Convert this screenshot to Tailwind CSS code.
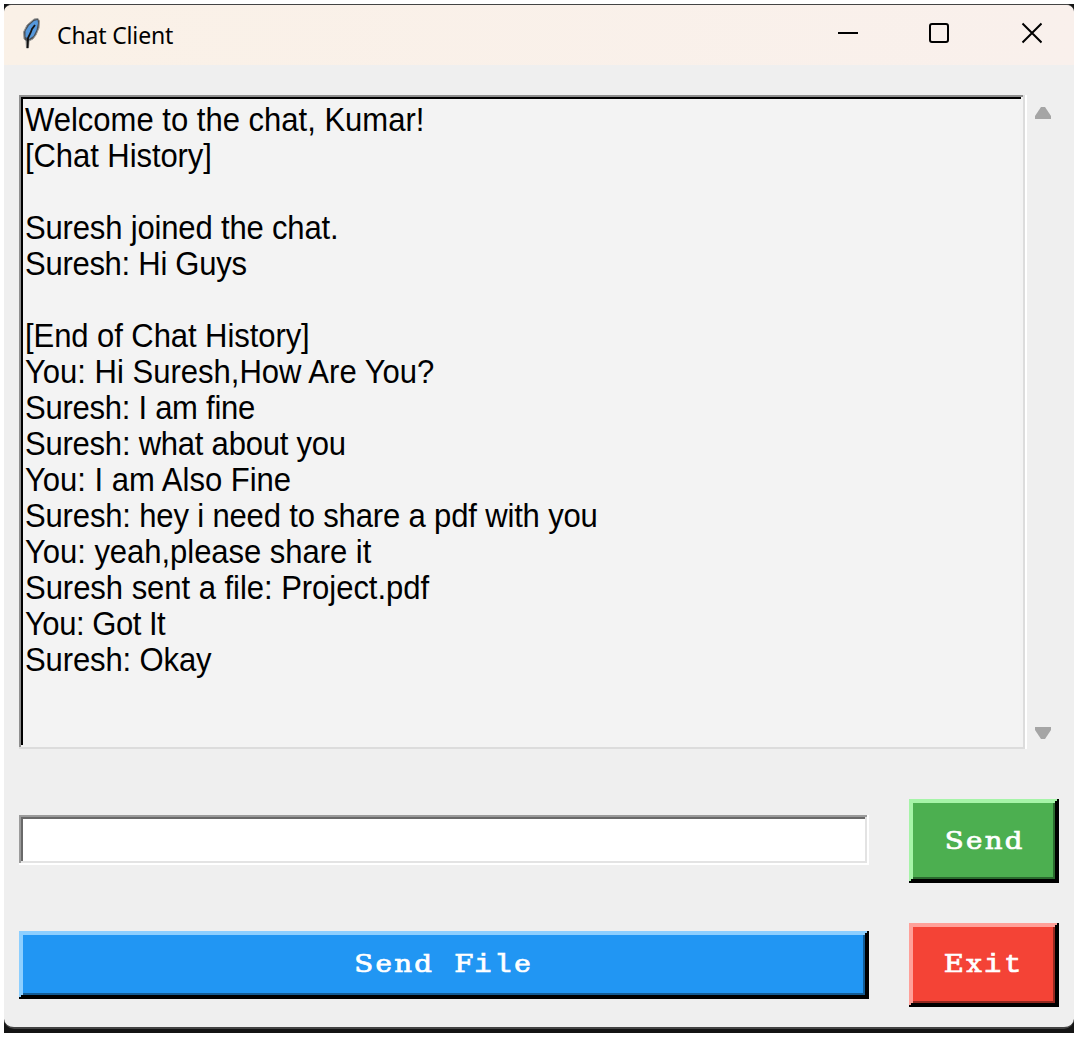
<!DOCTYPE html>
<html lang="en">
<head>
<meta charset="utf-8">
<title>Chat Client</title>
<script src="https://cdn.jsdelivr.net/npm/@tailwindcss/browser@4"></script>
</head>
<body class="bg-white w-[1078px] h-[1037px] overflow-hidden p-1 pb-0">
<div class="w-[1070px] h-[1029px] bg-[#141414]">
<main class="relative w-[1070px] h-[1025px] border-t border-b-2 border-[#444] rounded-t-[8px] rounded-b-[10px] bg-[#efefef] overflow-hidden">
  <header class="h-[60px] bg-gradient-to-r from-[#faf1e7] to-[#f9f0ec] flex items-center">
    <svg class="ml-[17px] mb-[2px] shrink-0" width="22" height="34" viewBox="0 0 22 34">
      <path d="M13 2 L17 1.500 L18.500 4 L18 11 L15 18 L12 22 L8 24 L7.500 31 L5.500 31 L5 24 L3 22 L2.500 15 L6 8 Z" fill="#4a4f55" stroke="#9a9a98" stroke-width="1"/>
      <path d="M13 4 L16.500 3 L17 6 L15.500 13 L12.500 19 L8 22 L4.500 20 L4.500 14 L8 8.500 Z" fill="#5598dc"/>
      <path d="M14 8 L11 12 L9.500 16 L7 21 L6.500 31" fill="none" stroke="#111" stroke-width="1.800"/>
    </svg>
    <h1 class="ml-[14px] font-['Noto_Sans'] text-[23px] leading-[30px] text-black whitespace-nowrap tracking-[-0.15px]">Chat Client</h1>
    <svg class="ml-auto mr-[32px] mb-[2px] shrink-0" width="206" height="24" viewBox="0 0 206 24" fill="none" stroke="#000" stroke-width="2">
      <path d="M2 11H22"/><rect x="94" y="2" width="18" height="18" rx="2"/><path d="M186.500 1.500L205.500 20.500M205.500 1.500L186.500 20.500"/>
    </svg>
  </header>
  <section class="ml-[15px] mt-[30px] flex">
    <div class="w-[1006px] h-[654px] p-[2px] shadow-[inset_-2px_-2px_0_#dcdcdc,inset_2px_2px_0_#8f8f8f]">
      <div class="h-full bg-[#f3f3f3] shadow-[inset_-2px_-2px_0_#f3f3f3,inset_2px_2px_0_#000] pl-[4px] pt-[5px]">
        <div class="origin-left scale-x-[0.94] font-['Liberation_Sans'] text-[33px] leading-[36px] text-black whitespace-nowrap">
          <p>Welcome to the chat, Kumar!</p>
          <p class="tracking-[-0.08px]">[Chat History]</p>
          <p>&nbsp;</p>
          <p class="tracking-[-0.18px]">Suresh joined the chat.</p>
          <p class="tracking-[-0.3px]">Suresh: Hi Guys</p>
          <p>&nbsp;</p>
          <p class="tracking-[-0.08px]">[End of Chat History]</p>
          <p>You: Hi Suresh,How Are You?</p>
          <p class="tracking-[-0.28px]">Suresh: I am fine</p>
          <p class="tracking-[-0.25px]">Suresh: what about you</p>
          <p>You: I am Also Fine</p>
          <p class="tracking-[-0.17px]">Suresh: hey i need to share a pdf with you</p>
          <p class="tracking-[-0.04px]">You: yeah,please share it</p>
          <p class="tracking-[-0.04px]">Suresh sent a file: Project.pdf</p>
          <p class="tracking-[-0.5px]">You: Got It</p>
          <p class="tracking-[-0.13px]">Suresh: Okay</p>
        </div>
      </div>
    </div>
    <div class="w-[2px] bg-white"></div>
    <div class="ml-[7px] pt-3 pb-[10px] flex flex-col justify-between">
      <svg width="18" height="12" viewBox="0 0 18 12"><path d="M7 0H11L17 9V12H1V9Z" fill="#a5a5a5"/></svg>
      <svg width="18" height="12" viewBox="0 0 18 12"><path d="M1 0H17V3L11 12H7L1 3Z" fill="#a5a5a5"/></svg>
    </div>
  </section>
  <section class="mt-[50px] ml-[15px] flex gap-[40px]">
    <div class="mt-4 w-[850px] h-[50px] p-[2px] shadow-[inset_-2px_-2px_0_#fff,inset_2px_2px_0_#9b9b9b]">
      <div class="h-full bg-white shadow-[inset_-2px_-2px_0_#e3e3e3,inset_2px_2px_0_#696969]"></div>
    </div>
    <button class="w-[150px] h-[84px] p-[2px] shadow-[inset_-2px_-2px_0_#000,inset_2px_2px_0_#a6f4a8]">
      <span class="h-full pb-[1px] pl-[2px] flex items-center justify-center bg-[#4caf50] shadow-[inset_-2px_-2px_0_#000,inset_2px_2px_0_#a6f4a8,inset_-4px_-4px_0_#2a6a2e] text-white font-['DejaVu_Serif'] text-[24px] leading-[30px] tracking-[2px] [-webkit-text-stroke:0.7px_white]"><span class="inline-block scale-x-[1.15]">Send</span></span>
    </button>
  </section>
  <section class="mt-[40px] ml-[15px] flex gap-[40px]">
    <button class="mt-2 w-[850px] h-[68px] p-[2px] shadow-[inset_-2px_-2px_0_#000,inset_2px_2px_0_#8dcfff]">
      <span class="h-full pb-[1px] flex items-center justify-center bg-[#2196f3] shadow-[inset_-2px_-2px_0_#000,inset_2px_2px_0_#8dcfff,inset_-4px_-4px_0_#135b94] text-white font-['DejaVu_Serif'] text-[24px] leading-[30px] tracking-[2px] [-webkit-text-stroke:0.7px_white]"><span class="inline-block scale-x-[1.15] whitespace-pre">Send<span class="tracking-[9.8px]"> </span><span class="tracking-[0.7px]">F</span><span class="font-['Liberation_Mono'] text-[25px] tracking-[2.4px]">il</span>e</span></span>
    </button>
    <button class="w-[150px] h-[84px] p-[2px] shadow-[inset_-2px_-2px_0_#000,inset_2px_2px_0_#ffa099]">
      <span class="h-full pb-[1px] flex items-center justify-center bg-[#f44336] shadow-[inset_-2px_-2px_0_#000,inset_2px_2px_0_#ffa099,inset_-4px_-4px_0_#942820] text-white font-['DejaVu_Serif'] text-[24px] leading-[30px] tracking-[2px] [-webkit-text-stroke:0.7px_white]"><span class="inline-block scale-x-[1.15]">Ex<span class="font-['Liberation_Mono'] text-[25px] tracking-[2.4px]">it</span></span></span>
    </button>
  </section>
</main>
</div>
</body>
</html>
